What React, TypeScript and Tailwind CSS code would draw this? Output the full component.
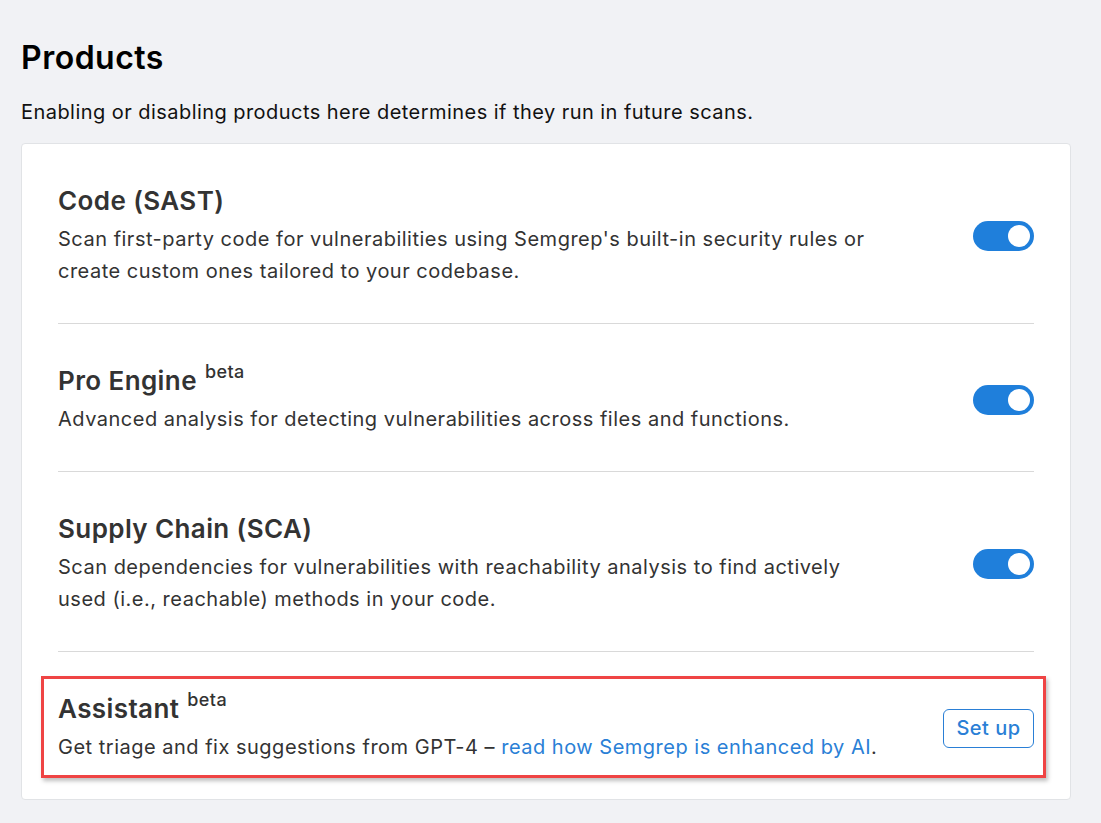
import React from "react";

type Product = {
  name: string;
  beta?: boolean;
  description: React.ReactNode;
  action: "toggle" | "setup";
  highlighted?: boolean;
};

const products: Product[] = [
  {
    name: "Code (SAST)",
    description: (
      <>
        Scan first-party code for vulnerabilities using Semgrep's built-in security rules or
        <br />
        create custom ones tailored to your codebase.
      </>
    ),
    action: "toggle",
  },
  {
    name: "Pro Engine",
    beta: true,
    description: "Advanced analysis for detecting vulnerabilities across files and functions.",
    action: "toggle",
  },
  {
    name: "Supply Chain (SCA)",
    description: (
      <>
        Scan dependencies for vulnerabilities with reachability analysis to find actively
        <br />
        used (i.e., reachable) methods in your code.
      </>
    ),
    action: "toggle",
  },
  {
    name: "Assistant",
    beta: true,
    description: (
      <>
        Get triage and fix suggestions from GPT-4 –{" "}
        <a href="#" className="text-[#2a7fd6]">
          read how Semgrep is enhanced by AI
        </a>
        .
      </>
    ),
    action: "setup",
    highlighted: true,
  },
];

function Toggle() {
  return (
    <button
      type="button"
      aria-pressed="true"
      className="flex h-[30px] w-[61px] shrink-0 items-center justify-end rounded-full bg-[#1f7fdb] pr-[4px]"
    >
      <span className="h-[22px] w-[22px] rounded-full bg-white" />
    </button>
  );
}

function ProductRow({ product, last }: { product: Product; last: boolean }) {
  return (
    <div className={last ? "relative" : "relative border-b border-[#d9d9d9]"}>
      {product.highlighted && (
        <div className="pointer-events-none absolute left-[-17px] right-[-12px] top-[24px] bottom-[21px] border-[3px] border-[#ef4444] shadow-[2px_3px_4px_rgba(0,0,0,0.25)]" />
      )}
      <div className="flex items-center justify-between pt-[41px] pb-[36px]">
        <div>
          <h3 className="text-[26px] leading-[32px] font-semibold tracking-[0.4px] text-[#333]">
            {product.name}
            {product.beta && (
              <sup className="ml-[8px] text-[18px] font-medium tracking-[0.4px] top-[-12px]">beta</sup>
            )}
          </h3>
          <p className="mt-[6px] text-[20px] leading-[32px] tracking-[0.5px] text-[#333]">
            {product.description}
          </p>
        </div>
        {product.action === "toggle" ? (
          <Toggle />
        ) : (
          <button
            type="button"
            className="h-[39px] w-[91px] rounded-[6px] border border-[#2a7fd6] text-[20px] font-medium tracking-[0.5px] text-[#2a7fd6]"
          >
            Set up
          </button>
        )}
      </div>
    </div>
  );
}

export default function App() {
  return (
    <div
      className="min-h-[823px] bg-[#f1f2f5] pl-[21px] pr-[30px] pt-[34px]"
      style={{ fontFamily: "Inter, 'Noto Sans', sans-serif" }}
    >
      <h1 className="text-[32px] leading-[48px] font-semibold tracking-[0.5px] text-black">Products</h1>
      <p className="mt-[16px] text-[20px] leading-[28px] tracking-[0.45px] text-[#111]">
        Enabling or disabling products here determines if they run in future scans.
      </p>
      <div className="mt-[17px] rounded-[4px] border border-[#e1e3e6] bg-white px-[36px]">
        {products.map((p, i) => (
          <ProductRow key={p.name} product={p} last={i === products.length - 1} />
        ))}
      </div>
    </div>
  );
}
